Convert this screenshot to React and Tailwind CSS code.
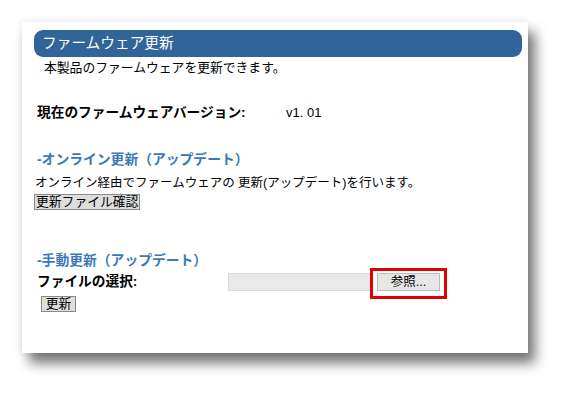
export default function App() {
  return (
    <div className="w-[570px] h-[396px] bg-white pt-[22px] pl-[22px] font-['Liberation_Sans','Noto_Sans_CJK_JP',sans-serif] text-black">
      <div className="w-[506px] h-[331px] bg-white px-[12px] pt-[8px] shadow-[7px_10px_12px_rgba(0,0,0,0.55),-1px_-1px_6px_rgba(0,0,0,0.08)]">
        <div className="w-[488px] h-[27px] rounded-[9px] bg-[#31659a] pl-[8px] text-[14.7px] leading-[27px] text-white">
          ファームウェア更新
        </div>
        <p className="mt-[4px] pl-[10px] text-[12.8px] leading-[14px]">
          本製品のファームウェアを更新できます。
        </p>

        <div className="mt-[30px] flex pl-[3px] text-[13.7px] leading-[16px]">
          <span className="w-[249px] font-bold">現在のファームウェアバージョン:</span>
          <span className="text-[13px]">v1. 01</span>
        </div>

        <h3 className="mt-[31px] pl-[3px] text-[13.8px] leading-[16px] font-bold text-[#3b78b9]">
          -オンライン更新（アップデート）
        </h3>
        <p className="mt-[8px] pl-[1px] text-[12.5px] leading-[14px]">
          オンライン経由でファームウェアの 更新(アップデート)を行います。
        </p>
        <button className="mt-[4px] block h-[16px] px-[1px] bg-[#dedede] border border-[#8a8a8a] text-[12.8px] leading-[14px]">
          更新ファイル確認
        </button>

        <h3 className="mt-[43px] pl-[3px] text-[13.8px] leading-[16px] font-bold text-[#3b78b9]">
          -手動更新（アップデート）
        </h3>
        <div className="mt-[4px] flex items-center pl-[3px] h-[18px]">
          <span className="w-[191px] text-[13.7px] leading-[16px] font-bold">ファイルの選択:</span>
          <div className="w-[144px] h-[18px] bg-[#e9e9e9] border border-[#dadada]" />
          <div className="relative ml-[5px]">
            <button className="block w-[63px] h-[18px] bg-[#e6e6e6] border border-[#bdbdbd] text-[12.5px] leading-[16px]">
              参照...
            </button>
            <div className="absolute -left-[7px] -top-[5px] -right-[7px] -bottom-[8px] border-[3px] border-[#e00000]" />
          </div>
        </div>
        <button className="mt-[5px] ml-[7px] block w-[35px] h-[16px] bg-[#dedede] border border-[#8a8a8a] text-[12.8px] leading-[14px]">
          更新
        </button>
      </div>
    </div>
  );
}
